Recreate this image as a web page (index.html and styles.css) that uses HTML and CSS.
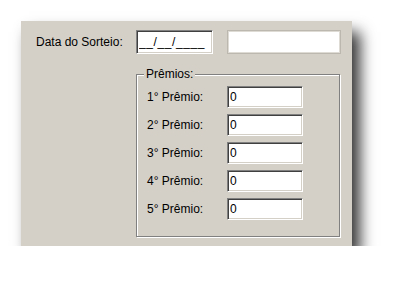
FILE: index.html
```html
<!DOCTYPE html>
<html lang="pt">
<head>
    <meta charset="UTF-8">
    <title>Sorteio</title>
    <link rel="stylesheet" href="styles.css">
</head>
<body>
<div class="window">
    <div class="date-row">
        <label class="date-label">Data do Sorteio:</label>
        <input class="field field-date" type="text" value="__/__/____">
        <input class="field-flat" type="text" value="">
    </div>
    <fieldset class="group">
        <legend>Prêmios:</legend>
        <div class="prize-row"><label>1° Prêmio:</label><input class="field field-prize" type="text" value="0"></div>
        <div class="prize-row"><label>2° Prêmio:</label><input class="field field-prize" type="text" value="0"></div>
        <div class="prize-row"><label>3° Prêmio:</label><input class="field field-prize" type="text" value="0"></div>
        <div class="prize-row"><label>4° Prêmio:</label><input class="field field-prize" type="text" value="0"></div>
        <div class="prize-row"><label>5° Prêmio:</label><input class="field field-prize" type="text" value="0"></div>
    </fieldset>
</div>
</body>
</html>
```
FILE: styles.css
```css
body {
    margin: 0;
    background: #fff;
    font: 12px "Liberation Sans", Arial, sans-serif;
    color: #000;
}
.window {
    margin: 21px 0 0 21px;
    width: 331px;
    height: 225px;
    box-sizing: border-box;
    padding: 9px 0 0 15px;
    background: #d4d0c8;
    box-shadow: 8px 11px 14px rgba(0, 0, 0, .8);
}
.date-row {
    display: flex;
    align-items: center;
    height: 24px;
}
.date-label {
    width: 100px;
}
.field {
    box-sizing: border-box;
    margin: 0;
    padding: 0 2px;
    font: 12px "Liberation Sans", Arial, sans-serif;
    background: #fff;
    border: 1px solid;
    border-color: #808080 #fff #fff #808080;
    box-shadow: inset 1px 1px #404040, inset -1px -1px #d4d0c8;
    outline: none;
}
.field-date {
    width: 77px;
    height: 24px;
    letter-spacing: .6px;
}
.field-flat {
    box-sizing: border-box;
    margin: 0 0 0 14px;
    width: 114px;
    height: 24px;
    background: #fff;
    border: 1px solid #bcb8b0;
    box-shadow: inset 1px 1px #dedbd4, inset -1px -1px #dedbd4;
    outline: none;
}
.group {
    margin: 13px 0 0 100px;
    width: 204px;
    box-sizing: border-box;
    padding: 5px 0 16px 10px;
    border: 1px solid #808080;
    box-shadow: inset 1px 1px #fff, 1px 1px #fff;
}
.group legend {
    padding: 0 2px;
    margin-left: -3px;
    line-height: 14px;
    background: #d4d0c8;
}
.prize-row {
    display: flex;
    align-items: center;
    height: 22px;
    margin-bottom: 6px;
}
.prize-row:last-child {
    margin-bottom: 0;
}
.prize-row label {
    width: 80px;
}
.field-prize {
    width: 76px;
    height: 22px;
}
```
